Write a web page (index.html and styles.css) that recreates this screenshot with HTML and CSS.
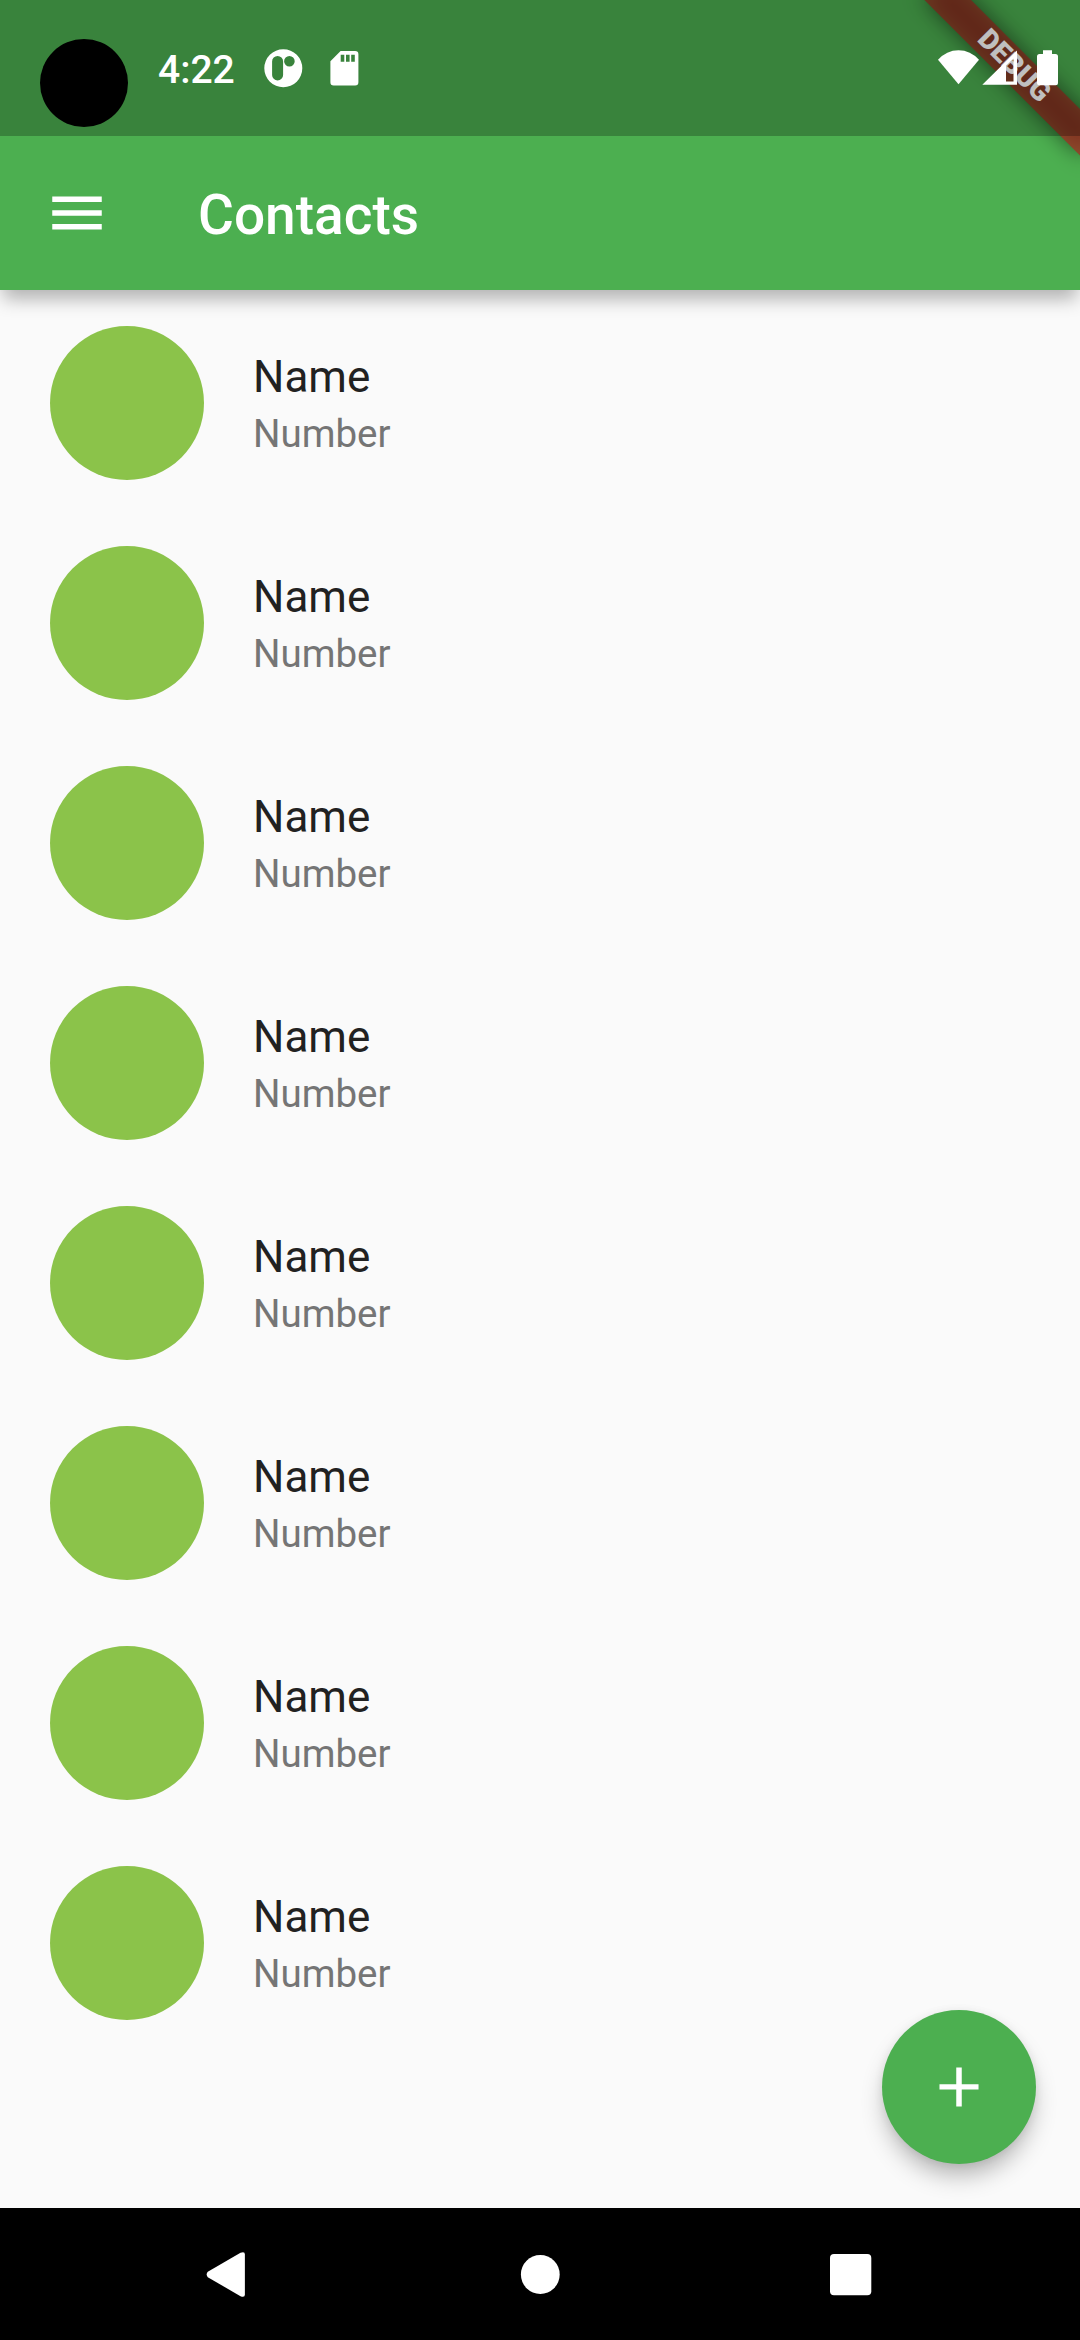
FILE: index.html
```html
<!DOCTYPE html>
<html lang="en">
<head>
<meta charset="utf-8">
<title>Contacts</title>
<link rel="stylesheet" href="styles.css">
</head>
<body>
<div class="screen">
  <header class="top">
    <div class="status">
      <span class="camera"></span>
      <span class="clock">4:22</span>
      <svg class="status-icons" width="100" height="60" viewBox="260 40 100 60" fill="#fff">
        <path fill-rule="evenodd" d="M283.3 49.3a19 19 0 1 1 0 38a19 19 0 1 1 0-38zM277.6 56a5.500 5.500 0 0 0-5.500 5.500v13.400a5.500 5.500 0 0 0 11 0v-13.400a5.500 5.500 0 0 0-5.500-5.500zM289.400 56a5.300 5.300 0 1 0 0 10.600a5.300 5.300 0 1 0 0-10.600z"/>
        <path fill-rule="evenodd" d="M340.600 51h14.500a3.300 3.300 0 0 1 3.300 3.300v28a3.300 3.300 0 0 1-3.300 3.300h-21.400a3.300 3.300 0 0 1-3.300-3.300v-21zM340.700 54.700v7h3.600v-7zM346 54.700v7h3.600v-7zM351.200 54.700v7h3.600v-7z"/>
      </svg>
      <svg class="signal-icons" width="140" height="60" viewBox="930 40 140 60" fill="#fff">
        <path d="M958.500 84.300L938 59.800Q946.500 50.200 958.500 50.200T979 59.800z"/>
        <path fill-rule="evenodd" d="M982.300 84.700L1017 50.500V84.700zM1006 65.500V81.400H1013.500V58.500z"/>
        <path d="M1043 50.300h9v3.700h3.500a2.500 2.500 0 0 1 2.500 2.500v26.300a2.500 2.500 0 0 1-2.500 2.500h-16a2.500 2.500 0 0 1-2.500-2.500v-26.300a2.500 2.500 0 0 1 2.500-2.500h3.500z"/>
      </svg>
    </div>
    <div class="appbar">
      <svg class="menu" width="66" height="66" viewBox="0 0 24 24" fill="#fff"><path d="M3 18h18v-2H3v2zm0-5h18v-2H3v2zm0-7v2h18V6H3z"/></svg>
      <h1 class="title">Contacts</h1>
    </div>
  </header>
  <main class="list">
    <div class="tile"><span class="avatar"></span><div class="text"><div class="name">Name</div><div class="number">Number</div></div></div>
    <div class="tile"><span class="avatar"></span><div class="text"><div class="name">Name</div><div class="number">Number</div></div></div>
    <div class="tile"><span class="avatar"></span><div class="text"><div class="name">Name</div><div class="number">Number</div></div></div>
    <div class="tile"><span class="avatar"></span><div class="text"><div class="name">Name</div><div class="number">Number</div></div></div>
    <div class="tile"><span class="avatar"></span><div class="text"><div class="name">Name</div><div class="number">Number</div></div></div>
    <div class="tile"><span class="avatar"></span><div class="text"><div class="name">Name</div><div class="number">Number</div></div></div>
    <div class="tile"><span class="avatar"></span><div class="text"><div class="name">Name</div><div class="number">Number</div></div></div>
    <div class="tile"><span class="avatar"></span><div class="text"><div class="name">Name</div><div class="number">Number</div></div></div>
  </main>
  <nav class="navbar">
    <svg width="70" height="70" viewBox="190 2240 70 70" fill="#fff"><path d="M207.800 2271.800L240.500 2252.800Q244.900 2251 244.900 2254.500V2294.500Q244.900 2298 240.500 2296.200L207.800 2277.200Q205.500 2274.500 207.800 2271.800z"/></svg>
    <svg width="70" height="70" viewBox="0 0 70 70" fill="#fff"><circle cx="35.300" cy="34.500" r="19.400"/></svg>
    <svg width="70" height="70" viewBox="820 2240 70 70" fill="#fff"><rect x="830" y="2254" width="41.300" height="41.300" rx="4"/></svg>
  </nav>
  <div class="fab"><svg width="66" height="66" viewBox="0 0 24 24" fill="#fff"><path d="M19.100 12.950h-6.100v6.150h-2v-6.150H4.900v-1.950h6.100V4.900h2v6.100h6.100v1.950z"/></svg></div>
  <div class="ribbon"><span>DEBUG</span></div>
  <div class="scrim"></div>
</div>
</body>
</html>
```
FILE: styles.css
```css
* { box-sizing: border-box; }

body {
  margin: 0;
  font-family: Roboto, sans-serif;
}

.screen {
  position: relative;
  display: flex;
  flex-direction: column;
  width: 1080px;
  height: 2340px;
  overflow: hidden;
  background: #fafafa;
}

/* Status bar and app bar */
.top {
  background: #4caf50;
  box-shadow: 0 12px 17px -3px rgba(0, 0, 0, .29);
}

.status {
  display: flex;
  height: 136px;
  padding: 39px 10px 0 40px;
  color: #fff;
}

/* Status content stays above the ribbon and the scrim */
.camera, .clock, .status-icons, .signal-icons {
  position: relative;
  z-index: 4;
}

.camera {
  width: 88px;
  height: 88px;
  border-radius: 50%;
  background: #000;
}

.clock {
  width: 102px;
  margin: 8px 0 0 30px;
  font-size: 39px;
  font-weight: 500;
  line-height: 46px;
}

.status-icons { margin-top: 1px; }
.signal-icons { margin: 1px 0 0 auto; }

.appbar {
  display: flex;
  align-items: center;
  height: 154px;
  padding-left: 44px;
}

.menu { display: block; }

.title {
  margin: 0 0 0 88px;
  padding-top: 4px;
  color: #fff;
  font-size: 55px;
  font-weight: 500;
  line-height: 64px;
}

/* Contact list */
.list {
  flex: 1;
  padding-top: 2.5px;
}

.tile {
  display: flex;
  align-items: center;
  gap: 49.5px;
  height: 220px;
  padding: 0 49.5px;
}

.avatar {
  width: 154px;
  height: 154px;
  border-radius: 50%;
  background: #8bc34a;
}

.text { padding-top: 1.5px; }

.name {
  color: #212121;
  font-size: 44px;
  line-height: 52px;
}

.number {
  margin-top: 8.5px;
  color: #757575;
  font-size: 38.5px;
  line-height: 45px;
}

/* System navigation */
.navbar {
  display: flex;
  justify-content: space-between;
  height: 132px;
  padding: 32px 190px 0;
  background: #000;
}

.fab {
  position: absolute;
  right: 44px;
  bottom: 176px;
  display: grid;
  place-items: center;
  width: 154px;
  height: 154px;
  border-radius: 50%;
  background: #4caf50;
  box-shadow: 0 15px 24px -4px rgba(0, 0, 0, .29), 0 1px 10px rgba(0, 0, 0, .07);
}

/* Corner ribbon */
.ribbon {
  position: absolute;
  z-index: 2;
  top: 77px;
  left: 970px;
  width: 220px;
  height: 33px;
  transform: rotate(45deg);
  transform-origin: 110px -77px;
}

.ribbon::before {
  content: "";
  position: absolute;
  inset: 0;
  background: rgba(0, 0, 0, .5);
  filter: blur(10.9px);
}

.ribbon span {
  position: absolute;
  inset: 0;
  background: rgba(183, 28, 28, .627);
  color: #fff;
  font-size: 28.05px;
  font-weight: 900;
  line-height: 31px;
  text-align: center;
}

.scrim {
  position: absolute;
  z-index: 3;
  top: 0;
  left: 0;
  width: 100%;
  height: 136px;
  background: rgba(0, 0, 0, .25);
}
```
